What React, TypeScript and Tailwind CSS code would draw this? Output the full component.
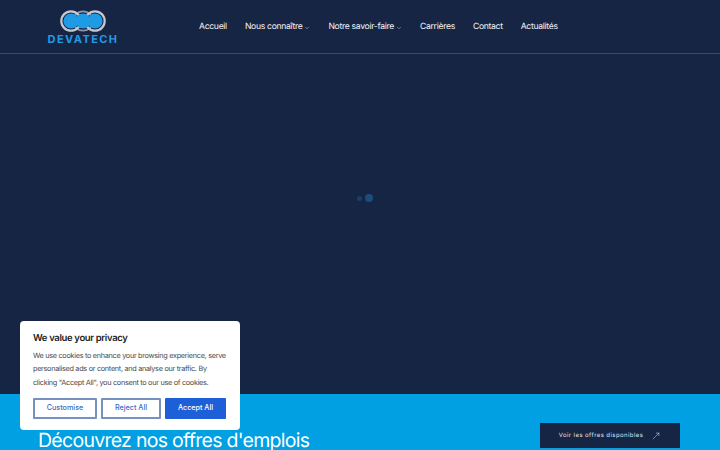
import { ChevronDown, MoveUpRight } from 'lucide-react'

const navItems = [
  { label: 'Accueil' },
  { label: 'Nous connaître', caret: true },
  { label: 'Notre savoir-faire', caret: true },
  { label: 'Carrières' },
  { label: 'Contact' },
  { label: 'Actualités' },
]

const Logo = () => (
  <div className="w-[70px] flex flex-col items-center">
    <svg width="46" height="22" viewBox="0 0 46 22" className="mb-[2px]">
      <circle cx="23" cy="11" r="9.7" fill="none" stroke="#8d97a6" strokeWidth="1.8" />
      <circle cx="11" cy="11" r="9.7" fill="none" stroke="#c3c9d2" strokeWidth="2.2" />
      <circle cx="35" cy="11" r="9.7" fill="none" stroke="#c3c9d2" strokeWidth="2.2" />
      <circle cx="11" cy="11" r="7.6" fill="#1f9be6" />
      <circle cx="23" cy="11" r="7.6" fill="#1f9be6" />
      <circle cx="35" cy="11" r="7.6" fill="#1f9be6" />
    </svg>
    <span className="font-bold text-[11px] leading-[10px] tracking-[1.4px] text-[#1f9be6] whitespace-nowrap">DEVATECH</span>
  </div>
)

const Header = () => (
  <header className="h-[54px] shrink-0 flex border-b border-[#3a4a6b]">
    <div className="ml-[48px] mt-[10px]">
      <Logo />
    </div>
    <nav className="ml-[81px] h-[53px] pt-[1px] flex items-center gap-[18px] text-[8.6px] tracking-[-0.3px] text-[#f2f4f7]">
      {navItems.map((item) => (
        <a key={item.label} className="flex items-center gap-[2px] whitespace-nowrap">
          {item.label}
          {item.caret && <ChevronDown size={6} strokeWidth={2} className="mt-[2px] text-[#c5cbd6]" />}
        </a>
      ))}
    </nav>
  </header>
)

const CookieBanner = () => (
  <div className="absolute left-[20px] top-[321px] w-[220px] h-[109px] bg-white rounded-[4px] px-[13px] pt-[11px] text-[#212121]">
    <p className="mt-[1px] text-[9.5px] leading-[12px] tracking-[-0.35px] font-semibold">We value your privacy</p>
    <p className="mt-[4px] text-[7.3px] leading-[13.3px] tracking-[-0.3px] text-[#4a4a4a] whitespace-nowrap">
      We use cookies to enhance your browsing experience, serve
      <br />
      personalised ads or content, and analyse our traffic. By
      <br />
      clicking "Accept All", you consent to our use of cookies.
    </p>
    <div className="mt-[9px] flex gap-[4px] text-[7.2px] font-medium">
      <button className="w-[64px] h-[21px] border-2 border-[#7491bf] rounded-[1px] text-[#3a6bc4]">Customise</button>
      <button className="w-[60px] h-[21px] border-2 border-[#7491bf] rounded-[1px] text-[#3a6bc4]">Reject All</button>
      <button className="w-[61px] h-[21px] bg-[#1c5fd8] rounded-[1px] text-white">Accept All</button>
    </div>
  </div>
)

export default function App() {
  return (
    <div className="relative w-[720px] h-[450px] overflow-hidden flex flex-col bg-[#172545] font-['Inter',sans-serif] antialiased [text-rendering:geometricPrecision]">
      <Header />

      {/* Preloader */}
      <main className="flex-1 flex items-start justify-center gap-[3px] pl-[9px] pt-[140px]">
        <span className="mt-[1.5px] w-[5px] h-[5px] rounded-full bg-[#1c3f68]" />
        <span className="w-[8px] h-[8px] rounded-full bg-[#1a4d7d]" />
      </main>

      {/* Job offers band */}
      <section className="h-[56px] shrink-0 bg-[#00a0e3] flex items-end justify-between pl-[38px] pr-[40px]">
        <h2 className="mb-[-2px] text-[19.5px] leading-[24px] tracking-[-0.72px] text-white whitespace-nowrap">Découvrez nos offres d'emplois</h2>
        <a className="mb-[2px] w-[140px] h-[25px] bg-[#172545] flex items-center justify-center gap-[8px] text-[6px] tracking-[0.42px] text-[#dfe3ea]">
          Voir les offres disponibles
          <MoveUpRight size={10} strokeWidth={1.2} />
        </a>
      </section>

      <CookieBanner />
    </div>
  )
}
